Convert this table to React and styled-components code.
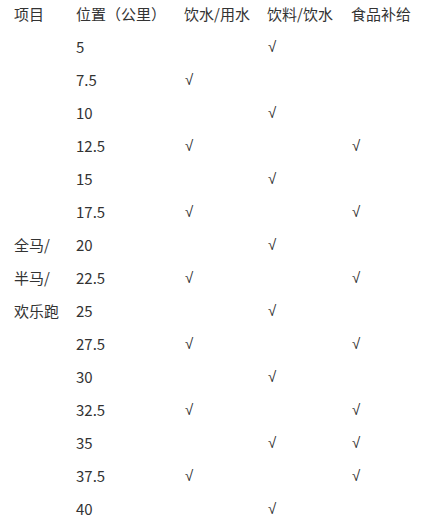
import React from "react";
import styled, { createGlobalStyle } from "styled-components";

const Global = createGlobalStyle`
  html, body { margin: 0; padding: 0; background: #fff; }
  body { font-family: "Noto Sans CJK SC", "Noto Sans", sans-serif; color: #333; }
`;

const Table = styled.div`
  display: grid;
  grid-template-columns: 62px 108px 83px 84px 1fr;
  grid-auto-rows: 33px;
  margin-top: -3px;
  padding-left: 14px;
  font-size: 15px;
  line-height: 33px;
`;

const Cell = styled.div`
  white-space: nowrap;
  grid-column: ${(p) => p.$col};
  grid-row: ${(p) => p.$row};
`;

const Check = styled(Cell)`
  padding-left: 1px;
  font-family: "Liberation Sans", Arial, sans-serif;
  font-size: 15px;
`;

const SpanCell = styled.div`
  grid-column: 1;
  grid-row: 2 / span 15;
  align-self: center;
  display: flex;
  flex-direction: column;
`;

const Line = styled.span`
  display: block;
  line-height: 33px;
`;

const headers = ["项目", "位置（公里）", "饮水/用水", "饮料/饮水", "食品补给"];

const rows = [
  ["5", [4]],
  ["7.5", [3]],
  ["10", [4]],
  ["12.5", [3, 5]],
  ["15", [4]],
  ["17.5", [3, 5]],
  ["20", [4]],
  ["22.5", [3, 5]],
  ["25", [4]],
  ["27.5", [3, 5]],
  ["30", [4]],
  ["32.5", [3, 5]],
  ["35", [4, 5]],
  ["37.5", [3, 5]],
  ["40", [4]],
];

export default function App() {
  return (
    <>
      <Global />
      <Table>
        {headers.map((h, i) => (
          <Cell key={h} $col={i + 1} $row={1}>
            {h}
          </Cell>
        ))}
        <SpanCell>
          <Line>全马/</Line>
          <Line>半马/</Line>
          <Line>欢乐跑</Line>
        </SpanCell>
        {rows.map(([km, checks], r) => (
          <React.Fragment key={km}>
            <Cell $col={2} $row={r + 2}>
              {km}
            </Cell>
            {checks.map((c) => (
              <Check key={c} $col={c} $row={r + 2}>
                √
              </Check>
            ))}
          </React.Fragment>
        ))}
      </Table>
    </>
  );
}
